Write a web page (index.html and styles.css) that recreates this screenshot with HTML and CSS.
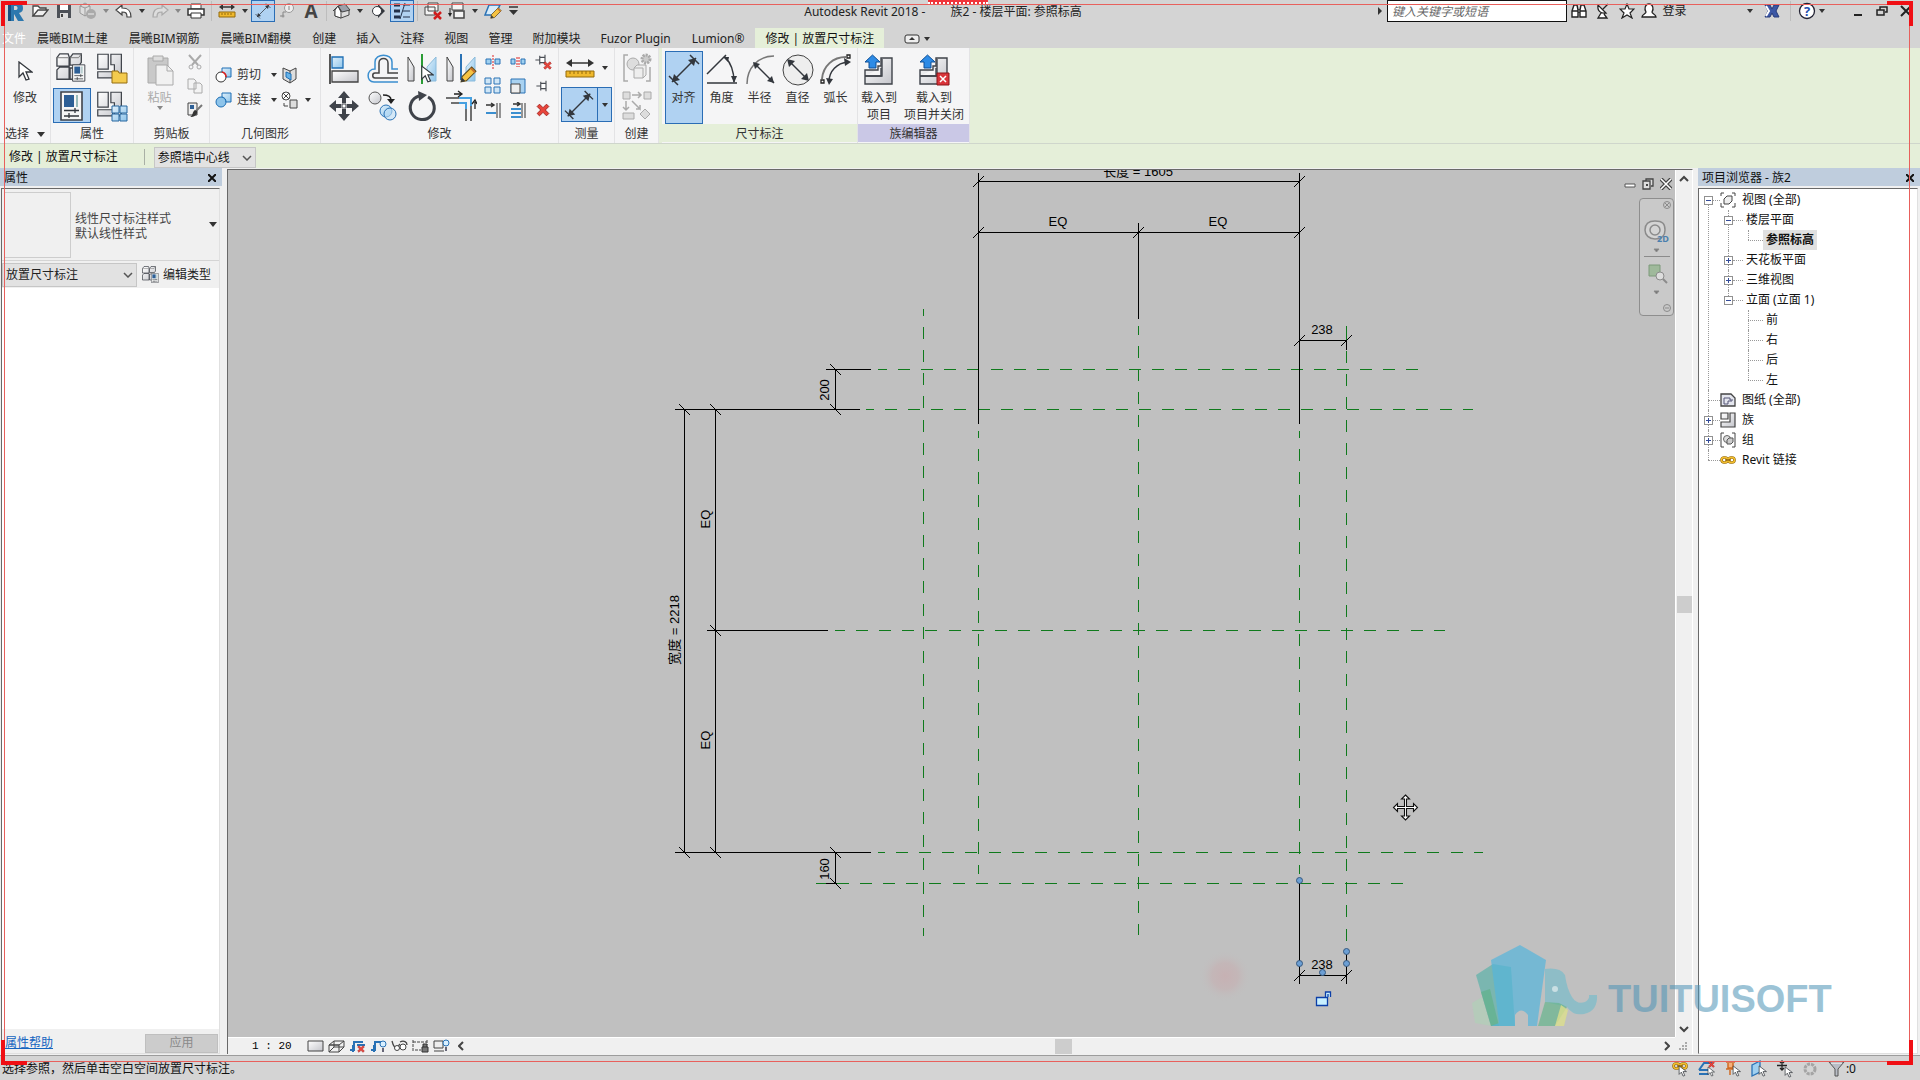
FILE: index.html
```html
<!DOCTYPE html>
<html lang="zh-CN">
<head>
<meta charset="utf-8">
<title>Autodesk Revit 2018 - 族2 - 楼层平面: 参照标高</title>
<link rel="stylesheet" href="styles.css">
</head>
<body>
<svg class="sprite" aria-hidden="true">
  <defs>
    <linearGradient id="metal" x1="0" y1="0" x2="1" y2="1"><stop offset="0" stop-color="#fff"/><stop offset="1" stop-color="#c4c5cb"/></linearGradient>
    <linearGradient id="sky" x1="0" y1="0" x2="1" y2="1"><stop offset="0" stop-color="#e2f1fb"/><stop offset="1" stop-color="#8ec4ea"/></linearGradient>
    <symbol id="i-align" viewBox="0 0 32 32"><path d="M4 28 28 4M1 22l9 9M22 1l9 9" fill="none" stroke="#33373d" stroke-width="1.5"/><path d="m4 28 2-8 6 6zM28 4l-2 8-6-6z" fill="#33373d"/></symbol>
    <symbol id="i-cursor" viewBox="0 0 16 20"><path d="M2 1v15l4-4 3 7 3-1-3-7h6z" fill="#fff" stroke="#33373d" stroke-width="1.3"/></symbol>
    <symbol id="i-pencil" viewBox="0 0 16 16"><path d="m1 15 1-5 9-9 4 4-9 9z" fill="#f5c242" stroke="#5d4a1c"/><path d="m1 15 1-4 3 3z" fill="#33373d"/><path d="m10 2 4 4" stroke="#c96f2b" stroke-width="1.5"/></symbol>
    <symbol id="i-pin" viewBox="0 0 16 16"><path d="M1 8h5M6 3v10M6 5h6v6H6M12 2v12" fill="#fff" stroke="#4a4e55" stroke-width="1.3"/></symbol>
    <symbol id="i-x" viewBox="0 0 12 12"><path d="m1 3 2-2 3 3 3-3 2 2-3 3 3 3-2 2-3-3-3 3-2-2 3-3z" fill="#e8453c" stroke="#a11f1c" stroke-width=".8"/></symbol>
    <symbol id="i-chain" viewBox="0 0 16 10"><g fill="none" stroke="#8f640b" stroke-width="2.6"><rect x="1.500" y="2.500" width="6" height="5" rx="2.500"/><rect x="8.500" y="2.500" width="6" height="5" rx="2.500"/></g><g fill="none" stroke="#f5c02e" stroke-width="1.400"><rect x="1.500" y="2.500" width="6" height="5" rx="2.500"/><rect x="8.500" y="2.500" width="6" height="5" rx="2.500"/></g><path d="M5 5h6" stroke="#8f640b" stroke-width="1.500"/></symbol>
    <symbol id="i-family" viewBox="0 0 32 32"><path d="M2 2h12v17H2zM17 2h12v27h-8V14h-4zM2 22h17v7H2z" fill="url(#metal)" stroke="#3f434a" stroke-width="1.4"/></symbol>
    <symbol id="i-cubes" viewBox="0 0 32 32"><path d="m1 5 3-4h9l1 3v10H1zM15 5l3-4h9v9l-2 3H15zM1 18l3-3h10v13H1zM15 16h11v12H15z" fill="url(#metal)" stroke="#3f434a" stroke-width="1.4"/><path d="M1 5h12M15 5h9M24 5l3-4" fill="none" stroke="#777"/></symbol>
    <symbol id="i-prop" viewBox="0 0 24 30"><path d="M1 1h21v28H1z" fill="#f6f6f6" stroke="#3f434a" stroke-width="1.6"/><path d="M4 4h10v12H4z" fill="#2d5f96"/><path d="M17 4v12" stroke="#9bb" stroke-width="2"/><path d="M4 19.500h15M4 25h15M15 17v5M9 22v5" stroke="#33373d" stroke-width="1.3"/></symbol>
    <symbol id="i-load" viewBox="0 0 32 32"><path d="M2 16h13v-4h3V4h11v26H2zM2 22h16v-8" fill="url(#metal)" stroke="#3f434a" stroke-width="1.4"/><path d="M19 5v17H2" fill="none" stroke="#3f434a" stroke-width="1.4"/><path d="M9.500 1 17 8h-4v6H6V8H2z" fill="#2d8be6" stroke="#0e4f96"/></symbol>
  </defs>
</svg>

<header class="titlebar">
  <nav class="quick" aria-label="快速访问">
    <button class="logo" aria-label="Revit"><svg width="20" height="22" viewBox="0 0 20 22"><path d="M3 2h8c5 0 7 2 7 6 0 3-1 4-4 5l5 8h-6l-4-7v7H3z" fill="#2d78ae"/><path d="M9 6h2c2 0 2 4 0 4H9z" fill="#d4d4d4"/><path d="M3 2h3v19H3z" fill="#174f80"/></svg></button>
    <button aria-label="打开"><svg width="18" height="16"><path d="M2 13V3h5l2 2h6v2" fill="#fff" stroke="#444" stroke-width="1.300"/><path d="m2 13 5-6h10l-5 6z" fill="#eee" stroke="#444" stroke-width="1.300"/></svg></button>
    <button aria-label="保存"><svg width="16" height="16"><path d="M1 1h14v14H1z" fill="#4d5158"/><path d="M4 1h8v6H4z" fill="#fff"/><path d="M4 10h8v5H4z" fill="#ddd"/><path d="M5 11h2v3H5z" fill="#444"/></svg></button>
    <button aria-label="同步"><svg width="18" height="18"><path d="m1 4 5-3 5 3v7l-5 3-5-3zM1 4l5 2 5-2M6 6v8" fill="#ddd" stroke="#999"/><circle cx="12" cy="12" r="5" fill="#aaa"/><path d="M9 12h6" stroke="#eee"/></svg></button>
    <span class="caret dim"></span>
    <button aria-label="撤销"><svg width="18" height="16"><path d="m1 7 6-5v3c7 0 9 3 9 9h-4c0-4-1-5-5-5v3z" fill="#fff" stroke="#444" stroke-width="1.200"/></svg></button>
    <span class="caret"></span>
    <button aria-label="重做"><svg width="18" height="16"><path d="m17 7-6-5v3c-7 0-9 3-9 9h4c0-4 1-5 5-5v3z" fill="#ddd" stroke="#aaa" stroke-width="1.200"/></svg></button>
    <span class="caret dim"></span>
    <button aria-label="打印"><svg width="18" height="16"><path d="M4 1h10v5H4z" fill="#fff" stroke="#444"/><path d="M1 6h16v6H1z" fill="#fff" stroke="#333" stroke-width="1.500"/><path d="M4 10h10v5H4z" fill="#fff" stroke="#333"/></svg></button>
    <span class="bar"></span>
    <button aria-label="测量"><svg width="18" height="16"><path d="M4 4h10" stroke="#333" stroke-width="1.500"/><path d="M5 1 1 4l4 3zM13 1l4 3-4 3z" fill="#333"/><path d="M1 9h16v5H1z" fill="#f0b92d" stroke="#936b0d"/><path d="M4 10v2M7 10v2M10 10v2M13 10v2" stroke="#936b0d"/></svg></button>
    <span class="caret"></span>
    <button class="on" aria-label="对齐尺寸标注"><svg width="16" height="16"><use href="#i-align"/></svg></button>
    <button aria-label="标记"><svg width="16" height="16"><circle cx="10" cy="5" r="4.500" fill="#eee" stroke="#999"/><path d="M10 3v4M1 13h3V9h3" stroke="#888" fill="none"/><circle cx="4" cy="13" r="1.500" fill="#999"/></svg></button>
    <button class="glyph-a" aria-label="文字">A</button>
    <span class="bar"></span>
    <button aria-label="三维视图"><svg width="18" height="16"><path d="M2 7v6l6 2 8-3V7" fill="#ddd" stroke="#444"/><path d="M2 7v6l6 2V8L5 3z" fill="#fff" stroke="#444"/><path d="m5 3 7-2 5 6-8 2z" fill="#9ba0aa" stroke="#444"/><path d="M0 8 5 3l3 6" fill="none" stroke="#444"/></svg></button>
    <span class="caret"></span>
    <button aria-label="剖面"><svg width="16" height="16"><path d="m8 1 7 7-7 7z" fill="#33373d"/><circle cx="7" cy="8" r="4.500" fill="#fff" stroke="#33373d"/></svg></button>
    <button class="on wide" aria-label="细线"><svg width="18" height="18"><path d="M1 3h6M1 9h6M1 15h6" stroke="#22314a" stroke-width="3"/><path d="M10 3h7M10 9h7M10 15h7M12 1 7 17" stroke="#22314a"/></svg></button>
    <span class="bar"></span>
    <button aria-label="关闭隐藏窗口"><svg width="18" height="18"><path d="M4 1h10v8H4zM1 5h10v8H1z" fill="#f4f4f4" stroke="#444"/><path d="m10 10 7 7M17 10l-7 7" stroke="#d01c1c" stroke-width="2.500"/></svg></button>
    <button aria-label="切换窗口"><svg width="18" height="18"><path d="M4 1h11v7H4z" fill="#f4f4f4" stroke="#444"/><path d="M6 9h10v7H6z" fill="#f4f4f4" stroke="#444" stroke-width="1.500"/><path d="M2 6v6" stroke="#222"/><path d="m0 11 2 4 2-4z" fill="#222"/></svg></button>
    <span class="caret"></span>
    <button aria-label="编辑草图"><svg width="18" height="18"><path d="M5 3h11l-5 10H1z" fill="#d8ecfa" stroke="#2a72b5" stroke-width="1.500"/><use href="#i-pencil" x="6" y="5" width="12" height="12"/></svg></button>
    <button class="custom" aria-label="自定义"><svg width="12" height="12"><path d="M2 2h9" stroke="#333" stroke-width="1.500"/><path d="M2 5h9l-4.500 5z" fill="#333"/></svg></button>
  </nav>
  <h1 class="title"><span>Autodesk Revit 2018 -</span><span>族2 - 楼层平面: 参照标高</span></h1>
  <div class="infocenter">
    <svg width="6" height="10"><path d="M1 1v8l4-4z" fill="#333"/></svg>
    <input class="search" type="text" placeholder="键入关键字或短语" aria-label="搜索">
    <button aria-label="查找"><svg width="16" height="16"><path d="M1 8 3 2h3l1 5h2l1-5h3l2 6v6H9V9H7v5H1zM1 8h6M9 8h6" fill="#fff" stroke="#222" stroke-width="1.400"/></svg></button>
    <button aria-label="通讯中心"><svg width="16" height="16"><path d="M3 2c-1 6 3 9 8 8zM8 6l5-5M6 10l-3 5h9l-3-4" fill="#fff" stroke="#222" stroke-width="1.300"/></svg></button>
    <button aria-label="收藏夹"><svg width="16" height="16"><path d="m8 1 2 5h5l-4 4 2 5-5-3-5 3 2-5-4-4h5z" fill="#fff" stroke="#222" stroke-width="1.200"/></svg></button>
    <button class="login"><svg width="16" height="18"><path d="M5 10C3 7 4 2 8 2s5 5 3 8c0 2 4 2 4 5H1c0-3 4-3 4-5z" fill="#fff" stroke="#222" stroke-width="1.300"/></svg>登录</button>
    <span class="caret"></span>
    <button class="exchange" aria-label="Exchange"><svg width="16" height="14"><path d="M1 1h5l2 4 2-4h5l-3 6 3 6h-5L8 9l-2 4H1l3-6z" fill="#3c57a5" stroke="#273a78"/><path d="m2 2 3 5-3 5" fill="none" stroke="#fff" stroke-width="2"/></svg></button>
    <span class="bar"></span>
    <button class="help" aria-label="帮助"><svg width="18" height="18"><circle cx="9" cy="9" r="7.500" fill="#fff" stroke="#223" stroke-width="1.300"/><text x="9" y="13.500" text-anchor="middle" class="q">?</text></svg></button>
    <span class="caret"></span>
    <button class="win first" aria-label="最小化"><svg width="12" height="12"><path d="M2 10h8" stroke="#222" stroke-width="2"/></svg></button>
    <button class="win" aria-label="还原"><svg width="12" height="12"><path d="M4 5V2h7v5H9M1 5h7v5H1z" fill="none" stroke="#222" stroke-width="1.500"/></svg></button>
    <button class="win" aria-label="关闭"><svg width="12" height="12"><path d="m1 1 10 10M11 1 1 11" stroke="#222" stroke-width="2"/></svg></button>
  </div>
</header>

<nav class="tabs" aria-label="功能区选项卡">
  <button class="file">文件</button><button class="mixed">晨曦BIM土建</button><button class="mixed">晨曦BIM钢筋</button><button class="mixed">晨曦BIM翻模</button><button>创建</button><button>插入</button><button>注释</button><button>视图</button><button>管理</button><button>附加模块</button><button class="mixed">Fuzor Plugin</button><button class="mixed">Lumion®</button><button class="active">修改 | 放置尺寸标注</button>
  <button class="toggle" aria-label="最小化功能区"><svg width="16" height="10"><rect x="1" y="1" width="14" height="8" rx="2" fill="#eee" stroke="#333"/><path d="m5 6 3-3 3 3z" fill="#333"/></svg><span class="caret"></span></button>
</nav>

<section class="ribbon">
  <div class="panel w-select">
    <div class="body"><button class="big"><svg width="32" height="32"><use href="#i-cursor" x="8" y="7" width="16" height="20"/></svg>修改</button></div>
    <h2>选择<span class="caret large"></span></h2>
  </div>
  <div class="panel w-prop">
    <div class="body grid2">
      <button aria-label="类型属性"><svg width="32" height="32"><use href="#i-cubes" width="30" height="32"/><use href="#i-prop" x="16" y="11" width="14" height="20"/></svg></button>
      <button aria-label="族类别"><svg width="32" height="32"><use href="#i-family" width="28" height="29"/><path d="M16 19h6l1 2h8v10H16z" fill="#f4cb4e" stroke="#946c10"/></svg></button>
      <button class="on" aria-label="属性"><svg width="26" height="30"><use href="#i-prop"/></svg></button>
      <button aria-label="族类型"><svg width="32" height="32"><use href="#i-family" width="28" height="29"/><path d="M16 16h7v7h-7zM24 16h7v7h-7zM16 24h7v7h-7zM24 24h7v7h-7z" fill="url(#sky)" stroke="#26679f"/></svg></button>
    </div>
    <h2>属性</h2>
  </div>
  <div class="panel w-clip">
    <div class="body">
      <button class="big off" disabled><svg width="32" height="32"><path d="M4 4h20v25H4z" fill="#c9c9c9" stroke="#aaa"/><path d="M9 2h10v5H9z" fill="#ddd" stroke="#aaa"/><path d="M12 11h11l6 6v14H12z" fill="#f1f1f1" stroke="#aaa"/><path d="M23 11v6h6" fill="none" stroke="#aaa"/></svg>粘贴<span class="caret dim"></span></button>
      <div class="smalls">
        <button disabled aria-label="剪切"><svg width="16" height="16"><path d="m2 1 9 10M14 1 5 11" stroke="#aaa" stroke-width="2"/><circle cx="4" cy="13" r="2" fill="none" stroke="#aaa"/><circle cx="12" cy="13" r="2" fill="none" stroke="#aaa"/></svg></button>
        <button disabled aria-label="复制"><svg width="16" height="16"><path d="M1 1h6l2 2v8H1zM7 5h6l2 2v8H7z" fill="#f3f3f3" stroke="#aaa"/></svg></button>
        <button aria-label="匹配类型"><svg width="16" height="16"><path d="M1 1h9v12H1z" fill="#eee" stroke="#444"/><path d="M3 3h4v4H3z" fill="#2d5f96"/><path d="m15 3-6 6" stroke="#777" stroke-width="2"/><path d="M10 9c1 4-3 6-7 6 3-1 2-5 5-7z" fill="#333"/></svg></button>
      </div>
    </div>
    <h2>剪贴板</h2>
  </div>
  <div class="panel w-geom">
    <div class="body geom">
      <button><svg width="18" height="18"><path d="M7 2h9v9H7z" fill="url(#sky)" stroke="#1e6fb5"/><circle cx="6" cy="11" r="5" fill="#fff" stroke="#333"/><path d="M7 6a5 5 0 0 1 4 5" fill="none" stroke="#d22" stroke-width="1.500"/></svg>剪切<span class="caret"></span></button>
      <button aria-label="拆分面"><svg width="18" height="18"><path d="m2 2 7 3 6-3v11l-6 4-7-4z" fill="#ddd" stroke="#444"/><path d="M9 5v12" stroke="#444"/><path d="m5 6 5 2v6l-5-3z" fill="#66b3e8" stroke="#1e6fb5"/></svg></button>
      <button><svg width="18" height="18"><circle cx="6" cy="11" r="5" fill="#8ec4ea" stroke="#1e6fb5"/><path d="M7 2h9v9h-5a5 5 0 0 0-4-5z" fill="url(#sky)" stroke="#1e6fb5"/></svg>连接<span class="caret"></span></button>
      <button aria-label="填色"><svg width="18" height="18"><circle cx="5" cy="5" r="4" fill="#fff" stroke="#444"/><path d="m2 2 6 6M8 2 2 8M3 12v3h4" fill="none" stroke="#444"/><path d="M9 9h7v8H9z" fill="#ddd" stroke="#444"/></svg><span class="caret"></span></button>
    </div>
    <h2>几何图形</h2>
  </div>
  <div class="panel w-modify">
    <div class="body">
      <div class="grid4">
        <button aria-label="对齐"><svg width="32" height="32"><path d="M2 1v30" stroke="#222" stroke-width="1.500"/><path d="M4 4h11v11H4z" fill="url(#sky)" stroke="#1e6fb5" stroke-width="1.300"/><path d="M4 18h26v11H4z" fill="url(#metal)" stroke="#444" stroke-width="1.300"/></svg></button>
        <button aria-label="偏移"><svg width="32" height="32"><path d="M31 25H8c-3 0-3-5 0-5h4V10c0-6 9-6 9 0v10h10" fill="none" stroke="#444" stroke-width="1.500"/><path d="M31 29H7c-8 0-8-13 1-13V9C8 0 25 0 25 9v7h6" fill="none" stroke="#3b8fd0" stroke-width="1.500"/></svg></button>
        <button aria-label="镜像-拾取轴"><svg width="32" height="32"><path d="M2 4v24h6V14z" fill="url(#metal)" stroke="#444"/><path d="M30 4v24h-9V14z" fill="url(#sky)" stroke="#8abbdc"/><path d="M16 1v30" stroke="#2a9c35" stroke-width="2"/><use href="#i-cursor" x="14" y="12" width="14" height="18"/></svg></button>
        <button aria-label="镜像-绘制轴"><svg width="32" height="32"><path d="M2 4v24h6V14z" fill="url(#metal)" stroke="#444"/><path d="M30 4v24h-9V14z" fill="url(#sky)" stroke="#8abbdc"/><path d="M16 1v26" stroke="#2a72b5" stroke-width="2"/><use href="#i-pencil" x="15" y="13" width="17" height="17"/></svg></button>
        <button aria-label="移动"><svg width="32" height="32"><path d="M16 1l6 7h-4v5h-4V8h-4zM16 31l6-7h-4v-5h-4v5h-4zM1 16l7-6v4h5v4H8v4zM31 16l-7-6v4h-5v4h5v4z" fill="#3f434a"/><path d="M14 14h4v4h-4z" fill="#fff" stroke="#3f434a"/></svg></button>
        <button aria-label="复制"><svg width="32" height="32"><circle cx="8" cy="8" r="6" fill="url(#metal)" stroke="#555"/><path d="M16 5c5 0 8 1 8 5" stroke="#222" stroke-width="1.500" fill="none"/><path d="m20 9 4 5 4-5z" fill="#222"/><circle cx="19" cy="21" r="6" fill="url(#sky)" stroke="#2a72b5"/><circle cx="23" cy="24" r="6" fill="#bfe0f6" fill-opacity=".6" stroke="#2a72b5"/></svg></button>
        <button aria-label="旋转"><svg width="32" height="32"><path d="M22 7a12 12 0 1 1-9-1" fill="none" stroke="#3f434a" stroke-width="3"/><path d="m12 1 9 4-8 6z" fill="#3f434a"/></svg></button>
        <button aria-label="修剪"><svg width="32" height="32"><path d="M1 8h13M6 13h8" stroke="#444" stroke-width="1.500"/><path d="M21 19v12M26 16v15" stroke="#444" stroke-width="1.500"/><path d="M14 8h12v8M14 13h7v6" fill="none" stroke="#46a0e0" stroke-width="2"/><path d="M9 4h7M13 1l4 3-4 3M30 19v-7M27 14l3-4 2 4" fill="none" stroke="#222" stroke-width="1.300"/></svg></button>
      </div>
      <div class="small9">
        <button aria-label="拆分图元"><svg width="16" height="16"><path d="M1 5h5v5H1zM10 5h5v5h-5z" fill="#9fd0f0" stroke="#2a72b5"/><path d="M8 1v14" stroke="#d22" stroke-dasharray="2 1"/></svg></button>
        <button aria-label="用间隙拆分"><svg width="16" height="16"><path d="M1 5h4v5H1zM11 5h4v5h-4z" fill="#9fd0f0" stroke="#2a72b5"/><path d="M7 3v10M9 3v10" stroke="#d22" stroke-dasharray="2 1"/></svg></button>
        <button aria-label="解锁"><svg width="18" height="16"><use href="#i-pin" y="-1" width="15" height="14"/><use href="#i-x" x="9" y="7" width="9" height="9"/></svg></button>
        <button aria-label="阵列"><svg width="18" height="18"><path d="M1 1h6v6H1zM10 1h6v6h-6zM1 10h6v6H1zM10 10h6v6h-6z" fill="#cfe6f7" stroke="#2a72b5"/></svg></button>
        <button aria-label="缩放"><svg width="16" height="16"><path d="M1 1h14v14H1z" fill="#a9d2f1" stroke="#2a72b5"/><path d="M1 6h9v9H1z" fill="#eee" stroke="#444"/></svg></button>
        <button aria-label="锁定"><svg width="16" height="14"><use href="#i-pin" width="15" height="14"/></svg></button>
        <button aria-label="修剪单个图元"><svg width="16" height="16"><path d="M1 3h8M6 1l3 2-3 2" stroke="#333" fill="none" stroke-width="1.500"/><path d="M1 11h10" stroke="#3b8fd0" stroke-width="2"/><path d="M12 1v15M15 1v15" stroke="#333"/></svg></button>
        <button aria-label="修剪多个图元"><svg width="16" height="16"><path d="M3 2h7M7 0l3 2-3 2" stroke="#333" fill="none" stroke-width="1.500"/><path d="M1 7h10M1 11h10M1 15h10" stroke="#3b8fd0" stroke-width="2"/><path d="M12 1v15M15 1v15" stroke="#333"/></svg></button>
        <button aria-label="删除"><svg width="14" height="14"><use href="#i-x"/></svg></button>
      </div>
    </div>
    <h2>修改</h2>
  </div>
  <div class="panel w-measure">
    <div class="body rows">
      <button aria-label="测量"><svg width="30" height="30"><path d="M3 10h24" stroke="#333" stroke-width="1.500"/><path d="m7 6-6 4 6 4zM23 6l6 4-6 4z" fill="#333"/><path d="M1 18h28v6H1z" fill="#f0b92d" stroke="#936b0d"/><path d="M5 18v3M9 18v3M13 18v3M17 18v3M21 18v3M25 18v3" stroke="#936b0d"/></svg><span class="drop"><span class="caret"></span></span></button>
      <button class="on" aria-label="对齐尺寸标注"><svg width="30" height="30"><use href="#i-align"/></svg><span class="drop"><span class="caret"></span></span></button>
    </div>
    <h2>测量</h2>
  </div>
  <div class="panel w-create">
    <div class="body rows">
      <button disabled aria-label="创建组"><svg width="30" height="30"><path d="M6 2H2v26h4M24 28h4V14" fill="none" stroke="#aaa" stroke-width="1.500"/><circle cx="11" cy="11" r="6" fill="#ddd" stroke="#aaa"/><path d="m12 15 3-3h9v10l-3 3h-9zM12 15h9v10" fill="#eee" stroke="#aaa"/><circle cx="24" cy="6" r="4" fill="#ccc" stroke="#aaa" stroke-dasharray="2 1" stroke-width="3"/></svg></button>
      <button disabled aria-label="创建类似"><svg width="30" height="30"><path d="M1 2h7v7H1zM22 2h7v7h-7zM1 23h11v6H1zM23 19l5 5-5 5-5-5z" fill="#ddd" stroke="#aaa"/><path d="M10 5h9M16 2l3 3-3 3M4 11v9M1 17l3 3 3-3M10 11l8 8v-4M18 19h-4" fill="none" stroke="#aaa" stroke-width="1.500"/></svg></button>
    </div>
    <h2>创建</h2>
  </div>
  <div class="panel w-dim green">
    <div class="body">
      <button class="big on"><svg width="32" height="32"><use href="#i-align"/></svg>对齐</button>
      <button class="big"><svg width="32" height="32"><path d="M1 29h30M1 20 20 1M19 3c6 6 9 14 9 25" fill="none" stroke="#33373d" stroke-width="1.500"/><path d="m17 3 5 5 1-5zM25 22l3 7 3-7z" fill="#33373d"/></svg>角度</button>
      <button class="big"><svg width="32" height="32"><path d="M3 30C3 14 14 2 30 2" fill="none" stroke="#777" stroke-width="1.500"/><path d="m10 9 20 20" stroke="#33373d" stroke-width="1.500"/><path d="m9 8 2 7 5-5zM30 29l-7-2 5-5z" fill="#33373d"/></svg>半径</button>
      <button class="big"><svg width="32" height="32"><circle cx="16" cy="16" r="15" fill="#eee" stroke="#444"/><path d="m7 7 18 18" stroke="#33373d" stroke-width="1.500"/><path d="m5 5 2 8 6-6zM27 27l-2-8-6 6z" fill="#33373d"/></svg>直径</button>
      <button class="big"><svg width="32" height="32"><path d="M2 25C3 12 13 3 26 3" fill="none" stroke="#777" stroke-width="2"/><path d="M9 28C9 17 17 9 28 8" fill="none" stroke="#33373d" stroke-width="1.500"/><path d="m6 24 3 7 4-6zM24 4l7 4-6 4z" fill="#33373d"/><path d="M1 26h3v3H1zM27 1h3v3h-3z" fill="#fff" stroke="#222" stroke-width="1.300"/></svg>弧长</button>
    </div>
    <h2>尺寸标注</h2>
  </div>
  <div class="panel w-fam violet">
    <div class="body">
      <button class="big"><svg width="32" height="32"><use href="#i-load"/></svg>载入到<br>项目</button>
      <button class="big wider"><svg width="32" height="32"><use href="#i-load"/><path d="M19 19h12v12H19z" fill="#d9343a" stroke="#8e1518"/><path d="m22 22 6 6M28 22l-6 6" stroke="#fff" stroke-width="1.500"/></svg>载入到<br>项目并关闭</button>
    </div>
    <h2>族编辑器</h2>
  </div>
</section>

<div class="options">
  <span class="mode">修改 | 放置尺寸标注</span>
  <span class="select opt-select"><select aria-label="参照"><option>参照墙中心线</option></select><svg width="10" height="6"><path d="m1 1 4 4 4-4" fill="none" stroke="#555" stroke-width="1.500"/></svg></span>
</div>

<main>
  <aside class="properties">
    <h2 class="dock">属性<button aria-label="关闭"><svg width="8" height="8"><path d="m0 0 8 8M8 0 0 8" stroke="#111" stroke-width="2"/></svg></button></h2>
    <div class="frame">
      <button class="type"><span class="preview"></span><span class="names">线性尺寸标注样式<br>默认线性样式</span><span class="caret large"></span></button>
      <div class="filter">
        <span class="select"><select aria-label="类型"><option>放置尺寸标注</option></select><svg width="10" height="6"><path d="m1 1 4 4 4-4" fill="none" stroke="#555" stroke-width="1.500"/></svg></span>
        <button class="edit"><svg width="18" height="18"><use href="#i-cubes" width="16" height="16"/><use href="#i-prop" x="9" y="7" width="8" height="10"/></svg>编辑类型</button>
      </div>
      <div class="list"></div>
      <div class="foot"><a href="#help">属性帮助</a><button disabled>应用</button></div>
    </div>
  </aside>

  <section class="viewer">
    <div class="canvas">
      <svg class="drawing" viewBox="228 170 1447 867" preserveAspectRatio="xMidYMid meet">
        <defs><radialGradient id="blush"><stop offset="0" stop-color="#c8adb0" stop-opacity=".8"/><stop offset=".5" stop-color="#c6b0b2" stop-opacity=".6"/><stop offset="1" stop-color="#c0c0c0" stop-opacity="0"/></radialGradient></defs>
        <circle cx="1225" cy="976" r="26" fill="url(#blush)"/>
        <g class="ref" stroke-dasharray="12 11.100">
          <path d="M878 369.500H1419" stroke-dashoffset="3"/><path d="M866 409.500H1473" stroke-dashoffset="4"/>
          <path d="M835 630.500H1445" stroke-dashoffset="2"/><path d="M878 852.500H1483" stroke-dashoffset="5"/>
          <path d="M837 883.500H1404"/>
          <path d="M923.500 309V936" stroke-dashoffset="5"/><path d="M978.500 431V874" stroke-dashoffset="5"/>
          <path d="M1138.500 326V935" stroke-dashoffset="3"/><path d="M1299.500 431V874" stroke-dashoffset="5"/>
          <path d="M1346.500 351V943"/>
        </g>
        <path class="ref" d="M816 883.500H849M1346.500 326V341"/>
        <g class="ink">
          <path d="M978.500 173V424M1299.500 173V424M1138.500 223V319M978 181.500H1300M978 232.500H1300M1299 340.500H1347M1346.500 341V350"/>
          <path d="M826 369.500H871M835.500 369V410M675 409.500H860M684.500 409V853M715.500 409V853M707 630.500H828M675 852.500H871M835.500 852V884M826 883.500H837"/>
          <path d="M1299.500 880V984M1346.500 951V984M1299 975.500H1347"/>
        </g>
        <path class="tick" d="m973 187 11-11M1294 187l11-11M973 238l11-11M1133 238l11-11M1294 238l11-11M1294 346l11-11M1341 346l11-11M1294 981l11-11M1341 981l11-11M679 404l11 11M710 404l11 11M710 625l11 11M679 847l11 11M710 847l11 11M830 364l11 11M830 404l11 11M830 847l11 11M830 878l11 11"/>
        <g class="dim">
          <text x="1138" y="176">长度 = 1605</text><text x="1058" y="226">EQ</text><text x="1218" y="226">EQ</text>
          <text x="1322" y="334">238</text><text x="1322" y="969">238</text>
          <text transform="translate(829 390) rotate(-90)">200</text><text transform="translate(829 869) rotate(-90)">160</text>
          <text transform="translate(710 519) rotate(-90)">EQ</text><text transform="translate(710 740) rotate(-90)">EQ</text>
          <text transform="translate(679 630) rotate(-90)">宽度 = 2218</text>
        </g>
        <g fill="#6c9fd4" stroke="#36597f"><circle cx="1299.500" cy="880.500" r="3"/><circle cx="1299.500" cy="963.500" r="3"/><circle cx="1346.500" cy="951.500" r="3"/><circle cx="1346.500" cy="963.500" r="3"/><circle cx="1322.500" cy="972.500" r="3"/></g>
        <path d="M1316.500 997.500h11v8h-11zM1325.500 997v-5h5v5M1328 997v-3" fill="#c8f0ff" stroke="#0c3fa8" stroke-width="1.300"/>
        <path d="m1405.500 795 4 4h-3v7.500h7v-3l4 4-4 4v-3h-7v7.500h3l-4 4-4-4h3v-7.500h-7v3l-4-4 4-4v3h7V799h-3z" fill="#fff" stroke="#111" stroke-width="1.100"/>
      </svg>
      <div class="mdi">
        <button aria-label="最小化"><svg width="12" height="12"><path d="M1 6h10v3H1z" fill="#fff" stroke="#555"/></svg></button>
        <button aria-label="还原"><svg width="12" height="12"><path d="M4 3V1h7v7H9M1 3h7v8H1z" fill="#ddd" stroke="#444" stroke-width="1.300"/><path d="M4 6h2v2H4z" fill="#444"/></svg></button>
        <button aria-label="关闭"><svg width="12" height="12"><path d="m1 1 10 10M11 1 1 11" stroke="#444" stroke-width="4"/><path d="m1 1 10 10M11 1 1 11" stroke="#fff" stroke-width="1.500"/></svg></button>
      </div>
      <div class="navbar">
        <svg width="34" height="116" fill="none" stroke="#8b8b8b"><circle cx="27" cy="6" r="3.500"/><path d="m25 4 4 4M29 4l-4 4"/><path d="M15 22c8 0 10 3 10 9s-4 9-10 9-10-4-10-9 3-9 10-9z" fill="#d4d4d4" stroke-width="1.500"/><circle cx="15" cy="31" r="5" stroke-width="1.500"/><text x="17" y="43" class="two">2D</text><path d="M14 50h5l-2.500 3z" fill="#777"/><path d="M4 57.500h26"/><path d="M9 66h11v11H9z" fill="#9fb99b" stroke="#7d9a7a"/><circle cx="20" cy="77" r="4" fill="#ddd"/><path d="m23 80 4 4" stroke-width="2"/><path d="M14 92h5l-2.500 3z" fill="#777"/><circle cx="27" cy="109" r="3.500"/><path d="M25 109h4"/></svg>
      </div>
    </div>
    <div class="vscroll"><svg width="10" height="8"><path d="m1 6 4-4 4 4" fill="none" stroke="#444" stroke-width="2"/></svg><span class="thumb"></span><svg width="10" height="8"><path d="m1 2 4 4 4-4" fill="none" stroke="#444" stroke-width="2"/></svg></div>
    <div class="viewbar">
      <span class="scale">1 : 20</span>
      <button aria-label="详细程度"><svg width="17" height="14"><path d="M1 2h15v10H1z" fill="url(#metal)" stroke="#444"/></svg></button>
      <button aria-label="视觉样式"><svg width="17" height="14"><path d="m1 6 5-4h10l-5 4zM1 6h10v7H1zM16 2v6l-5 5M6 2v6L1 13M6 8h10" fill="none" stroke="#444"/></svg></button>
      <button aria-label="裁剪视图"><svg width="17" height="14"><path d="M1 11h4V3h9M4 6v7M8 6h8" fill="none" stroke="#2a72b5" stroke-width="2"/><use href="#i-x" x="8" y="6" width="8" height="8"/></svg></button>
      <button aria-label="裁剪区域"><svg width="17" height="14"><path d="M1 11h4V3h6M4 6v7" fill="none" stroke="#2a72b5" stroke-width="2"/><circle cx="13" cy="5" r="3" fill="#d8efff" stroke="#2a72b5"/><path d="M12 9h2v4h-2z" fill="#667"/></svg></button>
      <button aria-label="临时隐藏"><svg width="17" height="14"><path d="M1 2c1 4 3 7 5 7s1-3 3-4M9 3c4-2 7 0 7 3" fill="none" stroke="#444" stroke-width="1.300"/><circle cx="6" cy="9" r="2.500" fill="#fff" stroke="#444"/><circle cx="12" cy="8" r="3" fill="#fff" stroke="#444"/></svg></button>
      <button aria-label="约束"><svg width="17" height="14"><path d="M1 1v12M15 1v5M1 3h14M3 11h6" fill="none" stroke="#444" stroke-dasharray="3 1"/><path d="M10 8h6v5h-6zM11 8V5h4v3" fill="#777" stroke="#333"/></svg></button>
      <button aria-label="预览"><svg width="17" height="14"><path d="M1 2h9v7H1zM1 12h10" fill="#eee" stroke="#444"/><circle cx="13" cy="4" r="3" fill="#d8efff" stroke="#2a72b5"/><path d="M12 8h2v4h-2z" fill="#667"/></svg></button>
      <svg width="6" height="10"><path d="M5 1 1 5l4 4" fill="none" stroke="#444" stroke-width="2"/></svg>
      <div class="hscroll"><span class="thumb"></span></div>
      <svg width="6" height="10"><path d="m1 1 4 4-4 4" fill="none" stroke="#444" stroke-width="2"/></svg>
    </div>
    <svg class="grip" width="10" height="10" fill="#aaa"><path d="M0 7h2v2H0zM3 7h2v2H3zM6 7h2v2H6zM3 4h2v2H3zM6 4h2v2H6zM6 1h2v2H6z"/></svg>
  </section>

  <aside class="browser">
    <h2 class="dock">项目浏览器 - 族2<button aria-label="关闭"><svg width="8" height="8"><path d="m0 0 8 8M8 0 0 8" stroke="#111" stroke-width="2"/></svg></button></h2>
    <div class="frame">
      <ul class="tree">
        <li><div class="row"><button class="exp minus" aria-label="折叠"></button><i></i><svg width="16" height="16"><path d="M4 1H1v3M12 1h3v3M1 11v4h3M15 11v4h-3" fill="none" stroke="#444"/><path d="m4 7 3-3h5v5l-3 3H4z" fill="#eee" stroke="#444"/></svg><span>视图 (全部)</span></div>
          <ul>
            <li><div class="row"><button class="exp minus" aria-label="折叠"></button><i></i><span>楼层平面</span></div>
              <ul><li><div class="row leaf"><i></i><span class="current">参照标高</span></div></li></ul></li>
            <li><div class="row"><button class="exp plus" aria-label="展开"></button><i></i><span>天花板平面</span></div></li>
            <li><div class="row"><button class="exp plus" aria-label="展开"></button><i></i><span>三维视图</span></div></li>
            <li><div class="row"><button class="exp minus" aria-label="折叠"></button><i></i><span>立面 (立面 1)</span></div>
              <ul><li><div class="row leaf"><i></i><span>前</span></div></li><li><div class="row leaf"><i></i><span>右</span></div></li><li><div class="row leaf"><i></i><span>后</span></div></li><li><div class="row leaf"><i></i><span>左</span></div></li></ul></li>
          </ul></li>
        <li><div class="row leaf"><i></i><svg width="16" height="16"><path d="M1 2h10l4 4v8H1z" fill="#e4e6ee" stroke="#444" stroke-width="1.300"/><path d="M4 6h6v2h3M4 6v6h4V9h4" fill="none" stroke="#557"/></svg><span>图纸 (全部)</span></div></li>
        <li><div class="row"><button class="exp plus" aria-label="展开"></button><i></i><svg width="16" height="16"><path d="M1 1h7v6H1zM10 1h5v14H1v-5h9z" fill="url(#metal)" stroke="#444" stroke-width="1.200"/></svg><span>族</span></div></li>
        <li><div class="row"><button class="exp plus" aria-label="展开"></button><i></i><svg width="16" height="16"><path d="M4 1H1v14h3M12 1h3v14h-3" fill="none" stroke="#444"/><circle cx="7" cy="7" r="3.500" fill="#ddd" stroke="#666"/><path d="m7 8 2-2h4v4l-2 2H7z" fill="#ccc" stroke="#555"/></svg><span>组</span></div></li>
        <li><div class="row leaf"><i></i><svg width="16" height="10"><use href="#i-chain"/></svg><span>Revit 链接</span></div></li>
      </ul>
    </div>
  </aside>
</main>

<footer class="status">
  <span>选择参照，然后单击空白空间放置尺寸标注。</span>
  <div class="toggles">
    <button aria-label="选择链接"><svg width="18" height="18"><use href="#i-chain" y="1" width="16" height="10"/><use href="#i-cursor" x="6" y="5" width="9" height="12"/></svg></button>
    <button aria-label="选择基线图元"><svg width="18" height="18"><path d="m1 10 5-7h8M1 14h10M1 10h9" fill="none" stroke="#2a72b5" stroke-width="2"/><use href="#i-x" x="10" y="1" width="7" height="7"/><use href="#i-cursor" x="9" y="6" width="8" height="11"/></svg></button>
    <button aria-label="选择锁定图元"><svg width="18" height="18"><path d="M2 2h9M4 3v5h5V3M2 9h9M6 10v5" fill="#f5b07a" stroke="#cf6a22" stroke-width="1.500"/><use href="#i-cursor" x="8" y="5" width="9" height="12"/></svg></button>
    <button aria-label="按面选择"><svg width="18" height="18"><path d="m2 5 8-4v11l-8 4z" fill="#9fd0f0" stroke="#2a72b5" stroke-width="1.300"/><use href="#i-cursor" x="8" y="5" width="9" height="12"/></svg></button>
    <button aria-label="选择时拖拽"><svg width="18" height="18"><path d="M6 1v9M1 5.500h10M4 3l2-2 2 2M4 8l2 2 2-2" fill="none" stroke="#222" stroke-width="1.300"/><use href="#i-cursor" x="8" y="6" width="9" height="12"/></svg></button>
    <button aria-label="后台进程"><svg width="18" height="18"><circle cx="8" cy="9" r="5" fill="none" stroke="#a4a4a4" stroke-width="3" stroke-dasharray="3 1"/></svg></button>
    <button class="filterbtn"><svg width="18" height="18"><path d="M1 2h15l-6 7v7H7V9z" fill="#b9bdc6" stroke="#555"/><path d="M3 3h11" stroke="#fff"/></svg>:0</button>
  </div>
</footer>

<svg class="watermark" width="364" height="82" aria-label="TUITUISOFT">
  <path d="M0 58 10 52 19 81 3 78z" fill="#a9d6b4" opacity=".5"/>
  <path d="M4 30 21 19 39 22 43 81H19z" fill="#54b0a8" opacity=".65"/>
  <path d="M9 47 18 44 27 81H19z" fill="#5cb083" opacity=".6"/>
  <path d="M48 0 74 15 65 81H56V70Q49 61 43 70V81H19V81L27 78 19 15z" fill="#56b5dc" opacity=".7"/>
  <path d="M73 24Q88 22 93 30Q95 44 100 52Q105 60 113 57Q118 54 117 50H125Q126 66 112 69Q101 71 95 62L73 57z" fill="#79bccb" opacity=".7"/>
  <path d="M73 57 87 58 95 62 83 81H66z" fill="#66b58d" opacity=".7"/>
  <path d="M89 60 96 65 92 81H83z" fill="#dcdf8c" opacity=".8"/>
  <circle cx="83" cy="44" r="3" fill="#c9dfe3"/>
  <text x="136" y="67">TUITUISOFT</text>
</svg>
<div class="recorder" aria-hidden="true"><b class="grab"></b><b class="tl"></b><b class="tr"></b><b class="bl"></b><b class="br"></b></div>
</body>
</html>
```
FILE: styles.css
```css
* { box-sizing: border-box; }
html, body { height: 100%; }
body {
  margin: 0; display: flex; flex-direction: column; min-height: 600px; overflow: hidden; position: relative;
  background: #f0f0f0; color: #222;
  font: 12px/16px "Noto Sans", "Noto Sans CJK SC", sans-serif;
}
button, input, select { font: inherit; color: inherit; margin: 0; padding: 0; border: 0; border-radius: 0; background: none; }
button { display: flex; align-items: center; justify-content: center; flex: none; white-space: nowrap; }
h1, h2 { margin: 0; font: inherit; }
svg { display: block; flex: none; }
ul { margin: 0; padding: 0; list-style: none; }
.sprite { position: absolute; width: 0; height: 0; }

.caret { flex: none; width: 0; height: 0; border: 3px solid transparent; border-top: 4px solid #333; border-bottom: 0; }
.caret.dim { border-top-color: #888; }
.caret.large { border-width: 5px 4px 0; }
.bar { width: 1px; height: 20px; background: #bdbdbd; flex: none; }
.on { background: #b0d2f2; outline: 1px solid #2a6db5; outline-offset: -1px; }

/* title bar */
.titlebar { display: flex; justify-content: space-between; height: 24px; flex: none; background: #d4d4d4; }
.quick { display: flex; align-items: center; height: 22px; }
.quick button { width: 24px; height: 22px; }
.quick .logo { width: 28px; padding-left: 2px; }
.quick .caret { margin: 0 3px; }
.quick .bar { margin: 0 3px; }
.quick .custom { width: 16px; }
.quick .glyph-a { font: bold 19px/22px "Open Sans", sans-serif; color: #444; }
.title { display: flex; gap: 25px; padding-top: 4px; margin-right: 12px; white-space: nowrap; }
.infocenter { display: flex; align-items: center; height: 22px; }
.infocenter button { width: 24px; height: 22px; }
.infocenter .search { width: 180px; height: 22px; margin: 0 0 0 4px; padding: 0 4px; border: 1px solid #111; background: #fff; }
.search::placeholder { color: #666; font-style: italic; opacity: 1; }
.infocenter .login { width: 50px; gap: 5px; }
.login + .caret { margin-left: 58px; }
.infocenter .exchange { margin: 0 6px 0 7px; }
.infocenter .help { margin-left: 4px; }
.q { font: bold 13px "Open Sans", sans-serif; fill: #2450b0; }
.infocenter .first { margin-left: 21px; }
.infocenter .win:last-child { margin-right: 2px; }

/* ribbon tabs */
.tabs { display: flex; align-items: flex-end; height: 24px; flex: none; background: #d4d4d4; }
.tabs button { height: 20px; padding: 1px 10px 0; }
.tabs .mixed { padding-right: 11px; }
.tabs .file { color: #fff; padding: 1px 1px 0 2px; }
.tabs .active { background: #e5efd9; color: #111; }
.tabs .toggle { margin-left: 10px; gap: 4px; }

/* ribbon */
.ribbon { display: flex; height: 96px; flex: none; background: #e5efd9; border-bottom: 1px solid #cfd6cc; }
.panel { display: flex; flex-direction: column; flex: none; height: 95px; background: #f5f5f6; border-right: 1px solid #e3e3e5; }
.panel h2 { display: flex; align-items: center; justify-content: center; gap: 8px; height: 18px; margin-bottom: 1px; padding-top: 2px; color: #333; }
.body { display: flex; height: 76px; justify-content: center; padding-top: 2px; color: #333; }
.w-select { width: 51px; } .w-prop { width: 83px; } .w-clip { width: 76px; } .w-geom { width: 111px; }
.w-modify { width: 238px; } .w-measure { width: 56px; } .w-create { width: 44px; } .w-dim { width: 196px; margin-left: 3px; } .w-fam { width: 112px; }
.green h2 { background: #e5efd9; } .violet h2 { background: #cac8e6; }
.big { flex-direction: column; justify-content: flex-start; width: 38px; height: 73px; padding-top: 3px; line-height: 17px; margin-top: 1px; }
.big svg { margin-bottom: 3px; }
.big.wider { width: 68px; }
.w-fam .body { justify-content: flex-start; gap: 2px; padding-left: 2px; }
.off, .off .caret { color: #aaa; }
.grid2 { display: grid; grid-template-columns: 38px 38px; grid-template-rows: 36px 35px; gap: 2px; }
.w-clip .body { gap: 4px; padding-left: 4px; }
.smalls { display: flex; flex-direction: column; }
.smalls button { width: 24px; height: 24px; }
.geom { display: grid; grid-template-columns: 66px 36px; grid-auto-rows: 25px; align-content: center; padding-left: 2px; }
.geom button { justify-content: flex-start; gap: 4px; }
.geom .caret { margin-left: 6px; }
.w-geom button:nth-child(even) .caret { margin-left: 2px; }
.grid4 { display: grid; grid-template-columns: repeat(4, 39px); grid-auto-rows: 37px; }
.small9 { display: grid; grid-template-columns: repeat(3, 25px); grid-auto-rows: 24px; }
.rows { flex-direction: column; align-items: center; justify-content: flex-start; gap: 2px; }
.rows button { height: 35px; }
.rows button > svg { margin: 0 3px; }
.drop { display: flex; align-items: center; padding: 0 4px; align-self: stretch; }
.on .drop { border-left: 1px solid #2a6db5; }

/* options bar */
.options { display: flex; align-items: center; gap: 9px; height: 24px; padding: 1px 0 0 9px; flex: none; background: #e5efd9; color: #111; }
.mode { padding-right: 26px; border-right: 1px solid #a9b0a5; }
.select { display: grid; align-items: center; }
.select > * { grid-area: 1 / 1; }
.select select { width: 100%; height: 100%; padding-left: 3px; appearance: none; border: 1px solid #c6c6c6; background: #e2e2e2; }
.select svg { justify-self: end; margin-right: 4px; pointer-events: none; }
.opt-select { width: 102px; height: 21px; align-self: flex-end; }

/* work area */
main { display: flex; flex: 1; min-height: 0; border-bottom: 1px solid #9c9c9c; background: #f0f0f0; }
.dock { display: flex; align-items: center; justify-content: space-between; height: 18px; flex: none; padding: 1px 4px 0; background: #bfcddd; color: #111; line-height: 17px; }
.dock button { width: 12px; height: 12px; }
.frame { flex: 1; min-height: 0; display: flex; flex-direction: column; margin: 2px 2px 1px 0; border: 1px solid #696969; border-right-color: #e0e0e0; border-bottom-color: #e0e0e0; }
.properties { display: flex; flex-direction: column; width: 222px; flex: none; }
.properties .frame { margin-left: 1px; }
.type { justify-content: flex-start; height: 72px; padding: 0 2px; border-bottom: 1px solid #d4d4d4; text-align: left; color: #444; line-height: 15px; }
.preview { width: 67px; height: 66px; border: 1px solid #cdcdcd; }
.names { flex: 1; padding: 2px 0 0 4px; }
.filter { display: flex; gap: 5px; padding: 2px 0 1px; height: 27px; }
.filter .select { width: 135px; color: #222; }
.edit { gap: 3px; color: #222; }
.list { flex: 1; background: #fff; }
.foot { display: flex; align-items: center; justify-content: space-between; height: 24px; padding: 4px 1px 0 3px; }
.foot a { color: #1465c0; }
.foot button { width: 73px; height: 19px; border: 1px solid #bfbfbf; background: #ccc; color: #8a8a8a; }

.viewer { flex: 1; min-width: 0; display: grid; grid-template-columns: 1fr 17px; grid-template-rows: 1fr 17px; margin: 1px 5px 1px 5px; border: solid #696969; border-width: 1px 0 0 1px; border-right: 1px solid #fff; }
.canvas { position: relative; background: #c0c0c0; min-width: 0; min-height: 0; overflow: hidden; }
.drawing { width: 100%; height: 100%; }
.ref { fill: none; stroke: #0f7a1c; shape-rendering: crispEdges; }
.ink { fill: none; stroke: #000; shape-rendering: crispEdges; }
.tick { fill: none; stroke: #000; }
.dim { font: 13px "Liberation Sans", "Noto Sans CJK SC", sans-serif; fill: #000; text-anchor: middle; }
.mdi { position: absolute; top: 8px; right: 3px; display: flex; gap: 6px; }
.navbar { position: absolute; top: 28px; right: 1px; width: 35px; height: 118px; border: 1px solid #8e8e8e; border-radius: 4px; background: #c9c9c9; }
.two { font: bold 9px "Open Sans", sans-serif; fill: #4a7fae; stroke: none; }
.vscroll { display: flex; flex-direction: column; align-items: center; justify-content: space-between; padding: 5px 0 4px; border-left: 1px solid #fff; background: #f0f0f0; }
.vscroll .thumb { width: 15px; height: 17px; background: #cdcdcd; }
.viewbar { display: flex; align-items: center; padding: 0 5px 0 24px; border-top: 1px solid #fff; background: #f0f0f0; }
.viewbar button { width: 21px; height: 16px; }
.scale { width: 53px; font: 11px "Liberation Mono", monospace; color: #000; }
.viewbar button + svg { margin-left: 6px; }
.hscroll { flex: 1; display: flex; justify-content: center; padding-right: 2px; }
.hscroll .thumb { width: 17px; height: 15px; background: #cdcdcd; }
.grip { align-self: center; justify-self: center; }

.browser { display: flex; flex-direction: column; width: 222px; flex: none; }
.browser .frame { background: #fff; }
.tree { padding-top: 1px; }
.tree ul { margin-left: 20px; }
.tree li { position: relative; }
.tree li::before { content: ""; position: absolute; left: 9px; top: 0; bottom: 0; border-left: 1px dotted #999; }
.tree li:last-child::before { bottom: auto; height: 10px; }
.tree > li:first-child::before { top: 10px; }
.row { position: relative; display: flex; align-items: center; height: 20px; padding-left: 5px; }
.row i { width: 10px; border-top: 1px dotted #999; }
.row.leaf i { width: 15px; margin-left: 4px; }
.row i:has(+ svg) { width: 7px; }
.row.leaf i:has(+ svg) { width: 12px; }
.row span { padding: 0 3px; line-height: 20px; color: #111; }
.row svg + span { margin-left: 3px; }
.row .current { background: #e0e0e0; font-weight: bold; }
.exp { position: relative; width: 9px; height: 9px; border: 1px solid #919191; background: #fff; }
.exp::before, .exp.plus::after { content: ""; position: absolute; left: 1px; top: 3px; width: 5px; height: 1px; background: #334b99; }
.exp.plus::after { left: 3px; top: 1px; width: 1px; height: 5px; }

/* status bar */
.status { display: flex; align-items: center; justify-content: space-between; height: 24px; flex: none; padding: 2px 64px 0 2px; background: #d4d4d4; color: #111; }
.toggles { display: flex; gap: 8px; }
.filterbtn { gap: 0; }

/* overlays */
.watermark { position: absolute; right: 84px; bottom: 53px; pointer-events: none; }
.watermark text { font: bold 38px "Liberation Sans", sans-serif; fill: #4d93b6; opacity: .55; }
.recorder { position: absolute; inset: 4px 10px 18px 4px; border: 1px solid #e8605c; pointer-events: none; }
.recorder b { position: absolute; width: 26px; height: 25px; border: 0 solid #f00f14; }
.recorder .tl { left: -4px; top: -4px; border-width: 4px 0 0 4px; }
.recorder .tr { right: -4px; top: -4px; border-width: 4px 4px 0 0; }
.recorder .bl { left: -4px; bottom: -4px; border-width: 0 0 4px 4px; }
.recorder .br { right: -4px; bottom: -4px; border-width: 0 4px 4px 0; }
.recorder .grab { left: calc(50% + 1px); margin-left: -30px; top: -5px; width: 60px; height: 4px; border: 0; border-bottom: 2px dotted #fff; background: #f0343a; }
```
